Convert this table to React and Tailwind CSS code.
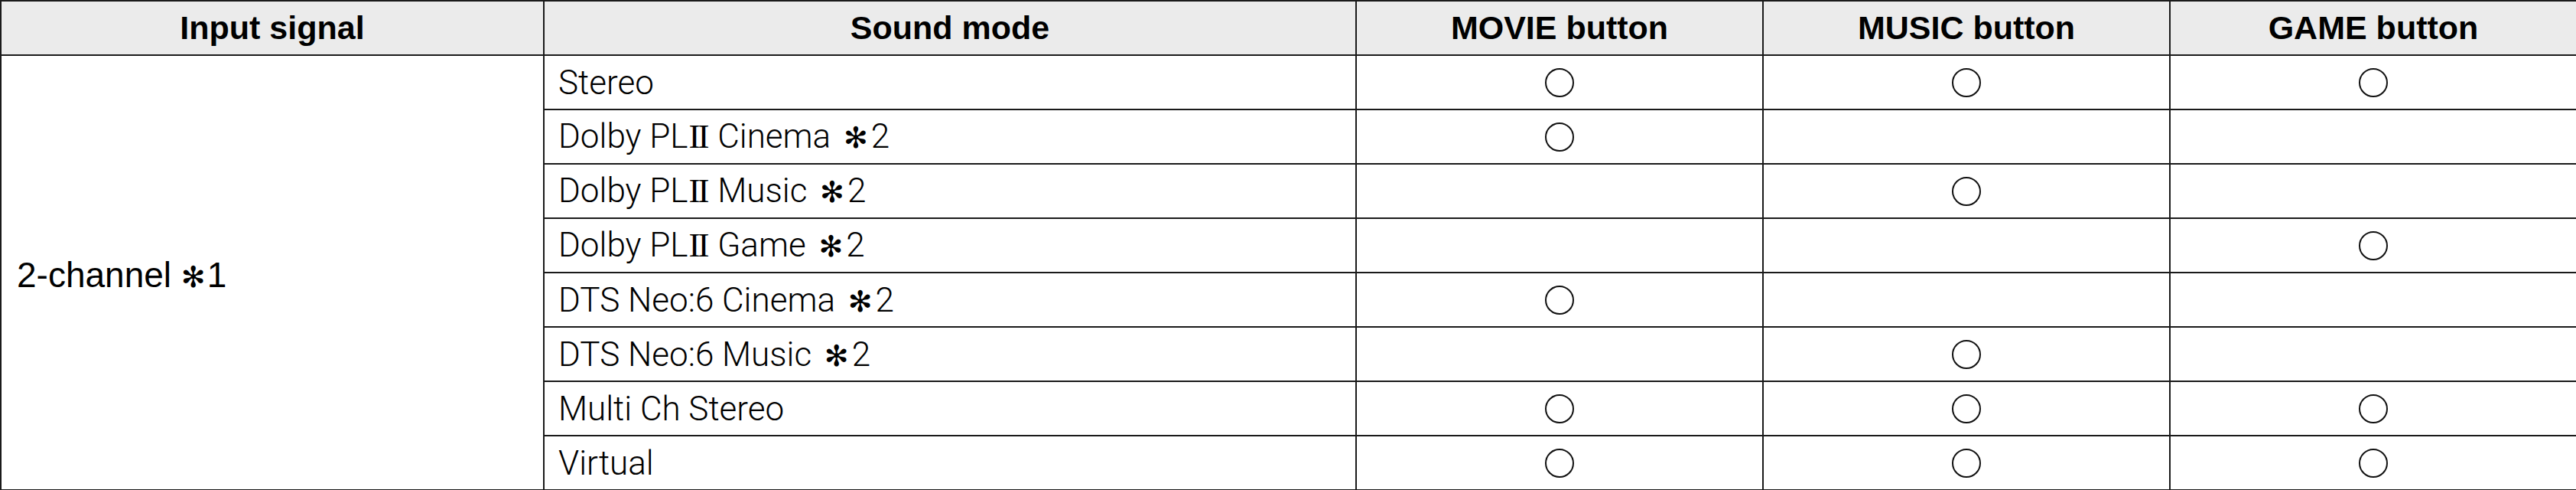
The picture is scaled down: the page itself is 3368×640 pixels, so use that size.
const columns = ["Input signal", "Sound mode", "MOVIE button", "MUSIC button", "GAME button"];

// [sound mode, movie, music, game]
const rows = [
  ["Stereo", true, true, true],
  ["Dolby PLII Cinema ✻2", true, false, false],
  ["Dolby PLII Music ✻2", false, true, false],
  ["Dolby PLII Game ✻2", false, false, true],
  ["DTS Neo:6 Cinema ✻2", true, false, false],
  ["DTS Neo:6 Music ✻2", false, true, false],
  ["Multi Ch Stereo", true, true, true],
  ["Virtual", true, true, true],
];

const Mark = () => (
  <span className="inline-block w-[38px] h-[38px] rounded-full border-2 border-[#111] align-middle" />
);

const renderMode = (text) => {
  // roman numeral II is set in a serif face, the note asterisk in DejaVu
  const parts = text.split(/(II|✻)/);
  return parts.map((p, i) =>
    p === "II" ? (
      <span
        key={i}
        className="font-['Liberation_Serif',serif] font-normal text-[45px] tracking-[-3px] ml-[1px] mr-[3px]"
      >
        II
      </span>
    ) : p === "✻" ? (
      <span key={i} className="font-['DejaVu_Sans',sans-serif] font-bold text-[38px] ml-[6px] mr-[4px]">
        ✻
      </span>
    ) : (
      <span key={i}>{p}</span>
    )
  );
};

export default function App() {
  return (
    <div className="w-[3368px] h-[640px] bg-white overflow-hidden">
      <table className="w-[3368px] table-fixed border-collapse border-2 border-[#222]">
        <colgroup>
          <col className="w-[710px]" />
          <col className="w-[1062px]" />
          <col className="w-[532px]" />
          <col className="w-[532px]" />
          <col className="w-[532px]" />
        </colgroup>
        <thead>
          <tr className="h-[71px] bg-[#ebebeb]">
            {columns.map((c) => (
              <th
                key={c}
                className="border-2 border-[#1a1a1a] p-0 text-center align-middle font-['Liberation_Sans',Arial,sans-serif] font-bold text-[43px] text-black"
              >
                {c}
              </th>
            ))}
          </tr>
        </thead>
        <tbody>
          {rows.map((r, i) => (
            <tr key={i} className="h-[71px]">
              {i === 0 && (
                <td
                  rowSpan={rows.length}
                  className="border-2 border-[#1a1a1a] pl-[20px] align-middle font-['Liberation_Sans',Arial,sans-serif] text-[46px] text-black"
                >
                  <span className="relative top-[3px] whitespace-nowrap">
                    2-channel{" "}
                    <span className="font-['DejaVu_Sans',sans-serif] font-bold text-[38px] mr-[2px]">✻</span>1
                  </span>
                </td>
              )}
              <td className="border-2 border-[#1a1a1a] pl-[18px] align-middle font-['Roboto','Liberation_Sans',sans-serif] font-light text-[44px] text-black whitespace-nowrap">
                {renderMode(r[0])}
              </td>
              {r.slice(1).map((on, j) => (
                <td key={j} className="border-2 border-[#1a1a1a] p-0 text-center align-middle leading-none">
                  {on && <Mark />}
                </td>
              ))}
            </tr>
          ))}
        </tbody>
      </table>
    </div>
  );
}
